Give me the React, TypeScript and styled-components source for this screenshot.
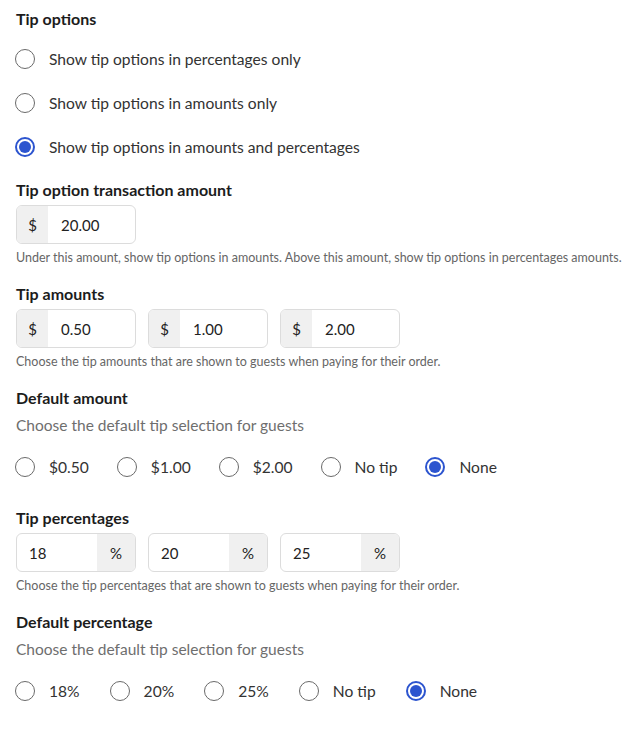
import React from "react";
import styled, { createGlobalStyle } from "styled-components";

const FONT = `"Source Sans Pro", "Lato", "Liberation Sans", sans-serif`;

const Global = createGlobalStyle`
  html, body { margin: 0; padding: 0; background: #fff; }
  body { font-family: ${FONT}; color: #222; }
  * { box-sizing: border-box; }
`;

const Page = styled.div`
  display: flex;
  flex-direction: column;
  padding: 9px 16px 24px 16px;
`;

const Heading = styled.div<{ $mt?: number }>`
  font-size: 16px;
  line-height: 20px;
  font-weight: 700;
  color: #1c1c1c;
  margin-top: ${(p) => p.$mt ?? 0}px;
`;

const Subtitle = styled.div`
  font-size: 15.5px;
  line-height: 20px;
  color: #6e6e6e;
  margin-top: 7px;
`;

const Helper = styled.div`
  font-size: 12.5px;
  line-height: 16px;
  color: #666;
  margin-top: 6px;
  white-space: nowrap;
`;

const RadioColumn = styled.div`
  display: flex;
  flex-direction: column;
  gap: 20px;
  margin-top: 18px;
`;

const RadioRow = styled.div<{ $gap: number }>`
  display: flex;
  align-items: center;
  gap: ${(p) => p.$gap}px;
  margin-top: 20px;
`;

const RadioItem = styled.label`
  display: flex;
  align-items: center;
  gap: 14px;
  height: 24px;
  font-size: 15.6px;
  color: #333;
  cursor: pointer;
`;

const Circle = styled.span<{ $on?: boolean }>`
  width: 20px;
  height: 20px;
  margin-left: -1px;
  border-radius: 50%;
  flex: none;
  border: ${(p) => (p.$on ? "2px solid #2c54cf" : "1.5px solid #6a6a6a")};
  display: flex;
  align-items: center;
  justify-content: center;
  &::after {
    content: "";
    display: ${(p) => (p.$on ? "block" : "none")};
    width: 12px;
    height: 12px;
    border-radius: 50%;
    background: #2c54cf;
  }
`;

const FieldRow = styled.div`
  display: flex;
  gap: 12px;
  margin-top: 5px;
`;

const Field = styled.div`
  display: flex;
  width: 120px;
  height: 39px;
  border: 1px solid #dcdcdc;
  border-radius: 6px;
  overflow: hidden;
  font-size: 15px;
  color: #222;
`;

const Affix = styled.span<{ $w: number }>`
  width: ${(p) => p.$w}px;
  flex: none;
  background: #f0f0f0;
  display: flex;
  align-items: center;
  justify-content: center;
`;

const Value = styled.span<{ $pl: number }>`
  flex: 1;
  display: flex;
  align-items: center;
  padding-left: ${(p) => p.$pl}px;
`;

const Radio = ({ label, on }: { label: string; on?: boolean }) => (
  <RadioItem>
    <Circle $on={on} />
    {label}
  </RadioItem>
);

const Money = ({ v }: { v: string }) => (
  <Field>
    <Affix $w={31}>$</Affix>
    <Value $pl={13}>{v}</Value>
  </Field>
);

const Percent = ({ v }: { v: string }) => (
  <Field>
    <Value $pl={12}>{v}</Value>
    <Affix $w={38}>%</Affix>
  </Field>
);

export default function App() {
  return (
    <Page>
      <Global />
      <Heading>Tip options</Heading>
      <RadioColumn>
        <Radio label="Show tip options in percentages only" />
        <Radio label="Show tip options in amounts only" />
        <Radio label="Show tip options in amounts and percentages" on />
      </RadioColumn>

      <Heading $mt={21}>Tip option transaction amount</Heading>
      <FieldRow>
        <Money v="20.00" />
      </FieldRow>
      <Helper>
        Under this amount, show tip options in amounts. Above this amount, show tip options in percentages amounts.
      </Helper>

      <Heading $mt={18}>Tip amounts</Heading>
      <FieldRow>
        <Money v="0.50" />
        <Money v="1.00" />
        <Money v="2.00" />
      </FieldRow>
      <Helper>Choose the tip amounts that are shown to guests when paying for their order.</Helper>

      <Heading $mt={18}>Default amount</Heading>
      <Subtitle>Choose the default tip selection for guests</Subtitle>
      <RadioRow $gap={29}>
        <Radio label="$0.50" />
        <Radio label="$1.00" />
        <Radio label="$2.00" />
        <Radio label="No tip" />
        <Radio label="None" on />
      </RadioRow>

      <Heading $mt={29}>Tip percentages</Heading>
      <FieldRow>
        <Percent v="18" />
        <Percent v="20" />
        <Percent v="25" />
      </FieldRow>
      <Helper>Choose the tip percentages that are shown to guests when paying for their order.</Helper>

      <Heading $mt={18}>Default percentage</Heading>
      <Subtitle>Choose the default tip selection for guests</Subtitle>
      <RadioRow $gap={31}>
        <Radio label="18%" />
        <Radio label="20%" />
        <Radio label="25%" />
        <Radio label="No tip" />
        <Radio label="None" on />
      </RadioRow>
    </Page>
  );
}
